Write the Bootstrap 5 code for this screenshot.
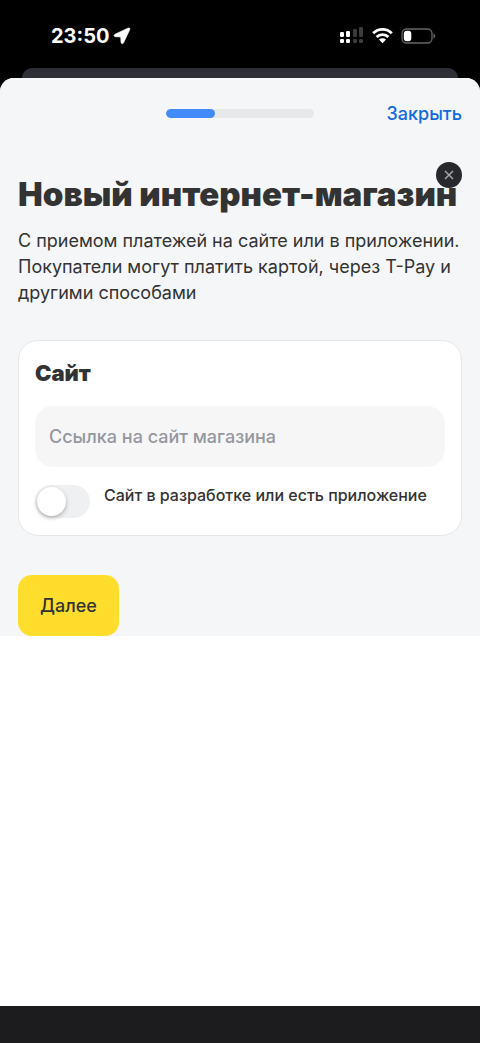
<!DOCTYPE html>
<html lang="ru">
<head>
<meta charset="utf-8">
<meta name="viewport" content="width=device-width, initial-scale=1">
<title>Новый интернет-магазин</title>
<link href="https://cdn.jsdelivr.net/npm/bootstrap@5.3.0/dist/css/bootstrap.min.css" rel="stylesheet">
<style>
  body { font-family: Inter, "Liberation Sans", sans-serif; background: #000; color: #333; font-size: 18px; line-height: 26px; }
  .status-bar { height: 68px; padding: 4px 44px 0 51px; color: #fff; }
  .clock { font-size: 20px; font-weight: 700; }
  .back-sheet { height: 10px; background: #2d2e36; border-radius: 10px 10px 0 0; margin: 0 22px; }
  .sheet { background: #fff; border-radius: 14px 14px 0 0; overflow: hidden; }
  .form-area { background: #f5f6f8; }
  .sheet-head { height: 71px; padding: 0 18px; display: grid; grid-template-columns: 1fr 148px 1fr; align-items: center; }
  .steps { height: 9px; border-radius: 5px; background: #e7e8ea; }
  .steps .progress-bar { background: #428bf9; border-radius: 5px; }
  .close-link { color: #126ae0; font-weight: 500; }
  .page-body { padding: 23px 18px 0; }
  .title { font-size: 33px; line-height: 44px; font-weight: 900; margin: 0 0 12px; }
  .dismiss { width: 26px; height: 26px; top: -10px; right: 0; background: #28292c; border: 0; }
  .site-card { margin-top: 34px; padding: 17px 16px; border: 1px solid #e4e6e7; border-radius: 20px; background: #fff; }
  .site-card h2 { font-size: 22px; line-height: 30px; font-weight: 900; margin: 0 0 18px; }
  .site-card .form-control { height: 61px; border: 0; border-radius: 18px; background: #f6f6f7; font-size: 18px; font-weight: 500; padding: 0 14px; }
  .site-card .form-control::placeholder { color: #95979e; opacity: 1; font-weight: 500; }
  .switch-row { margin-top: 16px; gap: 14px; min-height: 35px; }
  .switch-row .toggle { appearance: none; width: 55px; height: 33px; border-radius: 17px; background: #eff0f2; margin: 2px 0 0; padding: 2px; }
  .toggle::before { content: ""; display: block; width: 29px; height: 29px; border-radius: 50%; background: #fff; box-shadow: 0 2px 4px rgba(0,0,0,.28); }
  .toggle:checked { background: #428bf9; }
  .toggle:checked::before { margin-left: auto; }
  .switch-row label { font-size: 16px; line-height: 24px; font-weight: 500; }
  .next-btn { margin-top: 39px; height: 61px; padding: 0 22px; border: 0; border-radius: 14px; background: #ffdd2d; color: #333; font-size: 18px; font-weight: 500; }
  .bottom-bar { height: 37px; background: #1c1c1e; }
</style>
</head>
<body class="min-vh-100 d-flex flex-column">
<header class="status-bar d-flex align-items-center justify-content-between">
  <div class="d-flex align-items-center gap-1">
    <span class="clock">23:50</span>
    <svg width="18" height="18" viewBox="0 0 18 18" fill="#fff" stroke="#fff" stroke-width=".6" aria-hidden="true"><path d="M15.2 1.1 2 7.2C.5 8 .9 9.6 2.400 9.700L7.700 9.900 8 15.300C8.100 16.900 9.900 17.300 10.600 15.800L16.800 2.600C17.300 1.300 16.400.6 15.200 1.100Z"/></svg>
  </div>
  <div class="d-flex align-items-center gap-2">
    <svg width="25" height="18" viewBox="0 0 25 18" aria-hidden="true"><g fill="#fff"><rect x="1" y="5" width="4" height="5" rx="1.300"/><rect x="1" y="12" width="4" height="4" rx="1.300"/><rect x="7" y="4" width="4" height="6" rx="1.300"/><rect x="7" y="12" width="4" height="4" rx="1.300"/></g><g fill="#3c3c3c"><rect x="14" y="2" width="4" height="8" rx="1.300"/><rect x="14" y="12" width="4" height="4" rx="1.300"/><rect x="20" y="0" width="4" height="10" rx="1.300"/><rect x="20" y="12" width="4" height="4" rx="1.300"/></g></svg>
    <svg width="21" height="17" viewBox="0 0 21 17" fill="none" stroke="#fff" stroke-width="2.800" aria-hidden="true"><path d="M1.200 5.300a13.200 13.200 0 0 1 18.600 0M4.600 9a8.300 8.300 0 0 1 11.800 0"/><path d="m7 11.600 3.500 3.600 3.500-3.600a5 5 0 0 0-7 0Z" fill="#fff" stroke="none"/></svg>
    <svg width="35" height="17" viewBox="0 0 35 17" aria-hidden="true"><rect x="1" y="1" width="30" height="14" rx="4.500" fill="none" stroke="#66666a" stroke-width="1.300"/><rect x="2.800" y="2.800" width="7.500" height="10.500" rx="3" fill="#fff"/><path d="M32.500 5.500c2.200.8 2.200 4.200 0 5Z" fill="#66666a"/></svg>
  </div>
</header>
<div class="back-sheet"></div>
<main class="sheet flex-grow-1 d-flex flex-column">
  <div class="form-area">
    <div class="sheet-head">
      <span></span>
      <div class="progress steps" role="progressbar" aria-label="Шаг" aria-valuenow="1" aria-valuemin="0" aria-valuemax="3"><div class="progress-bar" style="width:33.3%"></div></div>
      <a href="#" class="close-link text-decoration-none text-end">Закрыть</a>
    </div>
    <div class="page-body">
      <div class="position-relative">
        <h1 class="title text-nowrap">Новый интернет-магазин</h1>
        <button type="button" class="dismiss position-absolute rounded-circle p-0 d-flex align-items-center justify-content-center" aria-label="Убрать"><svg width="10" height="10" viewBox="0 0 10 10" stroke="#a5a6a8" stroke-width="1.500"><path d="m1 1 8 8M9 1 1 9"/></svg></button>
      </div>
      <p class="mb-0">С приемом платежей на сайте или в приложении. Покупатели могут платить картой, через T-Pay и другими способами</p>
      <form>
        <section class="site-card">
          <h2>Сайт</h2>
          <input type="url" class="form-control" placeholder="Ссылка на сайт магазина" aria-label="Ссылка на сайт магазина">
          <div class="switch-row d-flex align-items-start">
            <input type="checkbox" role="switch" class="toggle flex-shrink-0" id="dev">
            <label for="dev">Сайт в разработке или есть приложение</label>
          </div>
        </section>
        <button type="button" class="btn next-btn">Далее</button>
      </form>
    </div>
  </div>
</main>
<footer class="bottom-bar"></footer>
<script src="https://cdn.jsdelivr.net/npm/bootstrap@5.3.0/dist/js/bootstrap.bundle.min.js"></script>
</body>
</html>
